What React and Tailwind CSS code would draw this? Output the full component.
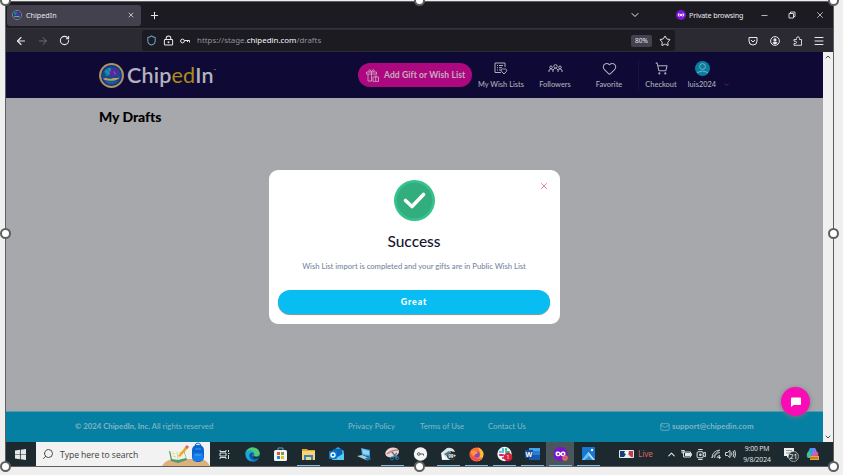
import {
  ArrowLeft, ArrowRight, RotateCw, Shield, LockKeyhole, Star, X, Plus,
  ChevronDown, ChevronUp, Minus, Menu, Heart, ShoppingCart, Mail, Search,
} from "lucide-react";

function PrivateMask({ className }) {
  return (
    <svg className={className} viewBox="0 0 16 16">
      <circle cx="8" cy="8" r="8" fill="#7d17d6" />
      <path d="M8 7C6.5 5 3 4.8 2.8 7.6c0 3.2 3.6 3.6 5.2 1.2 1.6 2.4 5.2 2 5.2-1.2C13 4.8 9.500 5 8 7Z" fill="#fff" />
      <circle cx="5.400" cy="7.800" r="1.200" fill="#7d17d6" />
      <circle cx="10.600" cy="7.800" r="1.200" fill="#7d17d6" />
    </svg>
  );
}

function Logo({ className }) {
  return (
    <svg className={className} viewBox="0 0 24 24">
      <circle cx="12" cy="12" r="11" fill="#172b80" stroke="#ae9260" strokeWidth="1.900" />
      <circle cx="12" cy="12" r="9" fill="#17498f" />
      <path d="M5 8c2-4 6-4 7-3l-1 6-4 2Z" fill="#16809f" />
      <path d="M11 6l6 0 2 5-6 2-3-3Z" fill="#64239c" />
      <path d="M7 8l3 2M10 5l1 3M14 8l2 3" stroke="#2fa4c4" strokeWidth=".8" />
      <path d="M3.800 15c4-2 5 1 8 0s4 0 8-1c-1 2-4 3-7 3s-7 0-9-2Z" fill="#bba064" />
      <path d="M6 18c4-1 8 1 12-1-2 3-10 4-12 1Z" fill="#17679b" />
    </svg>
  );
}

function TabStrip() {
  return (
    <div className="flex h-[26px] items-center bg-[#1c1b22] text-[#e8e8ed]">
      <div className="ml-px flex h-[21px] w-[134px] items-center rounded-[3px] bg-[#42414d] pl-[5px] pr-[6px]">
        <Logo className="size-[10px]" />
        <span className="ml-[4px] flex-1 text-[7.200px]">ChipedIn</span>
        <X size={8} strokeWidth={2.2} />
      </div>
      <Plus className="ml-[8px]" size={11} strokeWidth={2.2} />
      <ChevronDown className="ml-[469px]" size={12} strokeWidth={2} />
      <PrivateMask className="ml-[35px] size-[10px]" />
      <span className="ml-[3px] w-[55px] whitespace-nowrap text-[7.200px] tracking-[-0.150px]">Private browsing</span>
      <Minus className="ml-[16px]" size={9} />
      <svg className="ml-[19px] size-[8px] fill-none stroke-current" viewBox="0 0 8 8">
        <path d="M1 2.500H5.500V7H1ZM2.500 2.500V1H7V5.500H5.500" strokeWidth=".9" />
      </svg>
      <X className="ml-[19px]" size={10} strokeWidth={1.700} />
    </div>
  );
}

function AddressBar() {
  return (
    <div className="flex h-[24px] items-center border-t border-[#34333d] bg-[#2b2a33] text-[#e8e8ed]">
      <ArrowLeft className="ml-[9px]" size={12} strokeWidth={2.300} />
      <ArrowRight className="ml-[10px] text-[#6d6c75]" size={12} strokeWidth={2} />
      <RotateCw className="ml-[10px]" size={11} strokeWidth={2.300} />
      <div className="ml-[72px] flex h-[21px] w-[533px] items-center rounded-[3px] bg-[#1c1b22] pl-[4px] pr-[4px]">
        <Shield className="text-[#68a9cf]" size={11} strokeWidth={2.200} />
        <LockKeyhole className="ml-[6px]" size={11} strokeWidth={2.200} />
        <svg className="ml-[6px] h-[8px] w-[10px] fill-none stroke-current" viewBox="0 0 10 8">
          <circle cx="2.500" cy="4" r="1.900" />
          <path d="M4.500 3.500H9.500V5.500M7.500 3.500V5" />
        </svg>
        <span className="ml-[7px] flex-1 text-[7.900px] text-[#92919a]">
          https://stage.<span className="text-[#f5f5f7]">chipedin.com</span>/drafts
        </span>
        <span className="flex h-[12px] w-[21px] items-center justify-center rounded-[2px] bg-[#42414d] text-[6.500px]">80%</span>
        <Star className="ml-[7px]" size={12} strokeWidth={2} />
      </div>
      <svg className="ml-[73px] size-[10px] fill-none stroke-current" viewBox="0 0 10 10">
        <path d="M1 1.500H9V5A4 4 0 0 1 1 5ZM3 4L5 6L7 4" />
      </svg>
      <svg className="ml-[12px] size-[10px]" viewBox="0 0 10 10">
        <circle cx="5" cy="5" r="4.400" fill="none" stroke="currentColor" />
        <circle cx="5" cy="3.900" r="1.600" fill="currentColor" />
        <path d="M2.200 7Q5 4.500 7.800 7L5 8.500Z" fill="currentColor" />
      </svg>
      <svg className="ml-[13px] size-[10px] fill-none stroke-current" viewBox="0 0 10 10">
        <path d="M1 3.500H3.500V2.500Q3.500 .8 5 .8Q6.500 .8 6.500 2.500V3.500H8.500V9.300H1V7.500H2.200Q3.500 7.500 3.500 6.300Q3.500 5.200 2.200 5.200H1Z" strokeWidth=".9" />
      </svg>
      <Menu className="ml-[10px]" size={12} strokeWidth={2} />
    </div>
  );
}

function NavItem({ className, label, children }) {
  return (
    <div className={`flex flex-col items-center ${className}`}>
      <div className="flex h-[17px] items-center justify-center">{children}</div>
      <span className="mt-[2px] h-[11px] whitespace-nowrap leading-[11px]">{label}</span>
    </div>
  );
}

function SiteHeader() {
  return (
    <header className="flex h-[46px] items-center bg-[#0e0a35] font-['Lato',sans-serif] text-[7.400px] font-medium tracking-[0.040px] text-[#b0afbc]">
      <Logo className="ml-[93px] size-[25px]" />
      <div className="ml-[3px] flex w-[90px] items-start text-[21.500px] font-semibold leading-[24px] tracking-[0.180px] text-[#b4b2bd]">
        Chip<span className="font-normal text-[#ad8b19]">ed</span>In
        <span className="mt-px text-[3px] leading-[12px]">™</span>
      </div>
      <button className="ml-[141px] flex h-[24px] w-[114px] shrink-0 items-center rounded-full bg-[#ae0880] pl-[8px] text-[#c3aebf]">
        <svg className="size-[13px] fill-none stroke-current" viewBox="0 0 13 13">
          <path d="M6 12H2V5M.5 3H10.500V5H.5ZM5.500 3V12M3.500 3Q2 1 3.500 .8Q5 .8 5.500 3Q6 .8 7.500 .8Q9 1 7.500 3M10 5V6.500M7 8H12.500V12.400H7ZM9.700 8V12M8.500 6.700L9.700 8L11 6.700" strokeWidth=".85" />
        </svg>
        <span className="ml-[5px] whitespace-nowrap text-[8.600px] font-bold tracking-[0.060px]">Add Gift or Wish List</span>
      </button>
      <NavItem className="ml-[4px] w-[50px]" label="My Wish Lists">
        <svg className="h-[13px] w-[14px] fill-none stroke-current" viewBox="0 0 14 13">
          <path d="M7 10.500H1V1H11V5M3 3.500H4M5 3.500H9M3 5.700H4M5 5.700H8M3 8H4M5 8H7M10 12L7.500 9.300C6.500 7.300 9 6 10 7.500C11 6 13.500 7.300 12.500 9.300Z" />
        </svg>
      </NavItem>
      <NavItem className="ml-[8px] w-[42px]" label="Followers">
        <svg className="h-[9px] w-[15px] fill-none stroke-current" viewBox="0 0 15 9">
          <circle cx="7.500" cy="2.300" r="1.700" />
          <circle cx="3" cy="3.300" r="1.300" />
          <circle cx="12" cy="3.300" r="1.300" />
          <path d="M5 8V6Q7.500 2.500 10 6V8M1 8V6Q3 3.500 5 6M10 6Q12 3.500 14 6V8" />
        </svg>
      </NavItem>
      <NavItem className="ml-[13px] w-[40px]" label="Favorite">
        <Heart size={15} strokeWidth={1.700} />
      </NavItem>
      <div className="ml-[9px] h-[30px] w-px bg-[#17133f]" />
      <NavItem className="ml-[3px] w-[38px]" label="Checkout">
        <ShoppingCart size={13} strokeWidth={1.900} />
      </NavItem>
      <NavItem className="ml-[5px] w-[34px]" label="luis2024">
        <svg className="size-[15px]" viewBox="0 0 15 15">
          <circle cx="7.500" cy="7.500" r="7.500" fill="#087f9f" />
          <g fill="none" stroke="#77afc0">
            <circle cx="7.500" cy="5.500" r="2.900" />
            <path d="M2 11.500Q7.500 8.500 13 11.500" />
          </g>
        </svg>
      </NavItem>
      <ChevronDown className="ml-[4px] mt-[18px] shrink-0 text-[#8d1774]" size={7} strokeWidth={2.500} />
    </header>
  );
}

function SuccessModal() {
  return (
    <div className="absolute inset-x-0 top-[118px] flex justify-center font-['Lato',sans-serif]">
      <div className="relative mr-px flex h-[154px] w-[291px] flex-col items-center rounded-[9px] bg-white">
        <X className="absolute right-[11px] top-[11px] text-[#e9439c]" size={10} strokeWidth={1.700} />
        <svg className="mt-[10px] size-[41px] shrink-0" viewBox="0 0 41 41">
          <circle cx="20.500" cy="20.500" r="20.500" fill="#35c28b" />
          <circle cx="20.500" cy="20.500" r="17.800" fill="#32ad7d" />
          <path d="M11.500 20.500L18 26.500L29.500 14.500" fill="none" stroke="#fff" strokeWidth="3.600" strokeLinecap="round" strokeLinejoin="round" />
        </svg>
        <h2 className="mt-[10px] text-[15.500px] font-medium leading-[21px] text-[#171630]">Success</h2>
        <p className="mt-[8px] whitespace-nowrap text-[7.700px] font-medium leading-[12px] tracking-[-0.020px] text-[#77879f]">
          Wish List import is completed and your gifts are in Public Wish List
        </p>
        <button className="mt-[18px] h-[24px] w-[272px] shrink-0 rounded-full bg-[#07bdf2] text-[8.800px] font-black tracking-[0.900px] text-white shadow-[0_1px_1px_#77909b]">
          Great
        </button>
      </div>
    </div>
  );
}

function SiteFooter() {
  return (
    <footer className="flex h-[31px] items-center border-t border-[#4f9cb3] bg-[#0580a3] font-['Lato',sans-serif] text-[7.750px] font-medium text-[#83b3c3]">
      <div className="ml-[69px] w-[273px] whitespace-nowrap">
        <b>© 2024 ChipedIn, Inc.</b> All rights reserved
      </div>
      <span className="w-[72px]">Privacy Policy</span>
      <span className="w-[68px]">Terms of Use</span>
      <span className="w-[172px]">Contact Us</span>
      <Mail size={10} strokeWidth={1.800} />
      <b className="ml-[2px] text-[7.900px] tracking-[0.050px]">support@chipedin.com</b>
    </footer>
  );
}

function Scrollbar() {
  return (
    <div className="flex w-[10px] flex-col items-center justify-between bg-[#f0f0f0] py-[1px] text-[#4b4b4b]">
      <ChevronUp size={8} strokeWidth={3} />
      <ChevronDown size={8} strokeWidth={3} />
    </div>
  );
}

const taskIcons = [
  {
    name: "task view",
    art: <g fill="none" stroke="#d8dddf"><path d="M4 4V5.500H10V4M4 13V11.500H10V13M4 7H10V10H4ZM12.500 4V6M12.500 9V13" /><path d="M12 7.500H13.500" /></g>,
  },
  {
    name: "edge",
    art: (
      <g>
        <circle cx="8.500" cy="8.500" r="7.300" fill="#0c78c4" />
        <path d="M1.500 7C4-1 15 0 15.800 7.500C15.500 10 12 11 10 10C12 5 5 3 1.500 7Z" fill="#52ca70" />
        <path d="M1.500 7C4 3 9 4 10 7Q5 6 5 10Q5 13 9 15Q2 15 1.500 7Z" fill="#1aaad5" />
        <path d="M9 7Q6 9 9 11Q12 13 15 11Q12 15 8 13Q4 10 7 7Q8 6 9 7Z" fill="#134d86" />
        <path d="M10 10Q12 12 15.500 10L14.500 12Q11 13 9 11Z" fill="#1c2a30" />
      </g>
    ),
  },
  {
    name: "store",
    art: (
      <g>
        <path d="M6 4V2H11V4" fill="none" stroke="#4da6da" />
        <rect x="2" y="4" width="13" height="11" rx="1.500" fill="#f1f3f4" />
        <path d="M5 6H8V9H5Z" fill="#e45431" /><path d="M9 6H12V9H9Z" fill="#6faa35" />
        <path d="M5 10H8V13H5Z" fill="#188ed1" /><path d="M9 10H12V13H9Z" fill="#efb91e" />
      </g>
    ),
  },
  {
    name: "explorer", open: true,
    art: <g><path d="M2 3H7L8 4H15V14H2Z" fill="#e3a82b" /><path d="M2 5H15V14H2Z" fill="#f7d477" /><path d="M4 9H13V14H11V11H6V14H4Z" fill="#3584bd" /></g>,
  },
  {
    name: "outlook",
    art: <g><path d="M4 5L10 1L16 5V14H4Z" fill="#28a8ea" /><path d="M5 3H14V9L8 12Z" fill="#0a65b7" /><path d="M5 14L16 7V14Z" fill="#59caf2" /><rect x="1" y="5" width="8" height="8" rx="1" fill="#0877cc" /><circle cx="5" cy="9" r="2" fill="none" stroke="#fff" strokeWidth="1.300" /></g>,
  },
  {
    name: "remote",
    art: <g><path d="M5 2L14 4V11L6 9Z" fill="#3ba4df" /><path d="M6 3L13 5V9L7 8Z" fill="#8ed5f4" /><path d="M1 10L6 9L14 12L10 14Z" fill="#a7cce0" /><path d="M9 12L14 11L15 13L11 15Z" fill="#2673af" /></g>,
  },
  {
    name: "snip", open: true,
    art: <g><ellipse cx="8" cy="6.500" rx="7" ry="4.800" fill="#ead7d5" transform="rotate(-15 8 6)" /><path d="M3 8Q8 4 14 4" fill="none" stroke="#c88282" strokeWidth="1.500" /><path d="M8 6L13 12M13 7L9 11" stroke="#567889" strokeWidth="1.300" /><circle cx="8" cy="12.500" r="1.600" fill="none" stroke="#2674ae" /><circle cx="13" cy="12" r="1.600" fill="none" stroke="#2674ae" /></g>,
  },
  {
    name: "pass",
    art: <g><circle cx="8.500" cy="8" r="6.700" fill="#f5f5f5" /><circle cx="6.800" cy="8" r="1.300" fill="none" stroke="#525960" /><path d="M8 8H11.500V9.500" fill="none" stroke="#525960" /></g>,
  },
  {
    name: "inbox", open: true,
    art: <g><path d="M1 7L7 2Q13 1 15 6L10 5L14 14H2Z" fill="#dce8ea" /><path d="M4 8L9 5L12 8L8 11Z" fill="#4e7d8d" /><path d="M2 8L7 13H2Z" fill="#fff" /><ellipse cx="12" cy="10.500" rx="4.800" ry="3.500" fill="#242f34" /><text x="12" y="12.300" fontSize="4.500" fontWeight="700" textAnchor="middle" fill="#fff">99+</text></g>,
  },
  {
    name: "firefox", open: true,
    art: <g><circle cx="8.500" cy="8.500" r="7" fill="#ff7139" /><path d="M10 1Q17 5 15 11Q12 17 5 14Q10 15 12 11Q13 7 10 1Z" fill="#ffbf32" /><path d="M2 4Q1 14 8 15Q13 15 14 11Q11 14 7 12Q2 10 2 4Z" fill="#f8494d" /><circle cx="8.700" cy="8.500" r="3" fill="#8249c7" /><path d="M3 5Q8 4 10 7Q7 8 6 10Q3 9 3 5Z" fill="#ff983c" /></g>,
  },
  {
    name: "slack", open: true,
    art: <g><circle cx="8.500" cy="8" r="7.200" fill="#f5f4f5" /><g strokeWidth="2" strokeLinecap="round"><path d="M7 3V6M4 6H5" stroke="#36c5f0" /><path d="M10 6H13M10 3V4" stroke="#2eb67d" /><path d="M4 9H7M7 12V12" stroke="#e01e5a" /><path d="M9 10V12" stroke="#ecb22e" /></g><circle cx="12" cy="11" r="4.300" fill="#d8203f" /><text x="12" y="13.300" fontSize="6" textAnchor="middle" fill="#fff">1</text></g>,
  },
  {
    name: "word", open: true,
    art: <g><path d="M5 2H16V14H5Z" fill="#2b7cd3" /><path d="M5 2H16V5H5Z" fill="#41a5ee" /><path d="M5 9H16V14H5Z" fill="#165bb0" /><rect x="1" y="4" width="8" height="8" fill="#174f9f" /><text x="5" y="10.500" fontSize="7" fontWeight="700" textAnchor="middle" fill="#fff">W</text></g>,
  },
  {
    name: "private", open: true, active: true,
    art: <g><circle cx="8.500" cy="8" r="7" fill="#7b13cf" /><path d="M8.500 7C7 5 3.500 5 3.500 7.500C3.500 11 7 11 8.500 9C10 11 13.500 11 13.500 7.500C13.500 5 10 5 8.500 7Z" fill="#fff" /><circle cx="6.200" cy="8" r="1.100" fill="#7b13cf" /><circle cx="11" cy="8" r="1.100" fill="#7b13cf" /><circle cx="13" cy="12" r="2.700" fill="#f66b44" /><circle cx="13" cy="12" r="1.100" fill="#934ad4" /></g>,
  },
  {
    name: "photos", open: true,
    art: <g><rect x="2" y="1" width="13" height="13" rx="1" fill="#1976d2" /><path d="M2 14L8.500 6L15 14Z" fill="#b9e4fa" /><path d="M2 14L8 7L12 14Z" fill="#62bff0" /><path d="M5 14L9 10L13 14Z" fill="#278bd8" /><circle cx="12" cy="4" r="1.200" fill="#fff" /></g>,
  },
];

function SearchBox() {
  return (
    <div className="ml-[10px] flex h-[24px] w-[174px] items-center bg-[#f2f2f2] pl-[6px] text-[#3d3d3d]">
      <Search className="-scale-x-100" size={12} strokeWidth={1.800} />
      <span className="ml-[6px] whitespace-nowrap pt-[2px] font-['Open_Sans',sans-serif] text-[8.600px] tracking-[-0.050px]">Type here to search</span>
      <svg className="ml-auto h-[24px] w-[48px]" viewBox="0 0 48 24">
        <path d="M0 24Q3 18 12 17H39Q45 18 48 24Z" fill="#dcb17a" />
        <path d="M7 9L15 11L22 8L25 18L16 21L9 19Z" fill="#4d9a7b" />
        <path d="M8 8L15 10L21 7L24 16L16 18L10 17Z" fill="#f7f3da" />
        <path d="M15 10L16 18M10 11L13 12M11 14L14 15M17 11L20 10" stroke="#b5c8b3" strokeWidth=".7" />
        <path d="M16 14L24 4L26 6L18 15Z" fill="#eba72e" /><path d="M23 5L25 3L27 5L25 7Z" fill="#e8625b" />
        <path d="M33 5Q33 1 36 1Q39 1 39 5" fill="none" stroke="#126bd2" />
        <rect x="30" y="3" width="12" height="17" rx="5" fill="#0865d2" />
        <rect x="31" y="11" width="10" height="8" rx="1.500" fill="#127eeb" />
        <path d="M33 7H39M33 13H39" stroke="#65baf2" strokeWidth=".7" />
      </svg>
    </div>
  );
}

function Taskbar() {
  return (
    <div className="flex h-[24px] items-center bg-[#1c2a30] text-[#e4e8e9]">
      <svg className="ml-[9px] size-[11px] fill-current" viewBox="0 0 10 10">
        <path d="M0 1.400L4.500.7V4.700H0ZM5.200.6L10 0V4.700H5.200ZM0 5.300H4.500V9.300L0 8.600ZM5.200 5.300H10V10L5.200 9.400Z" />
      </svg>
      <SearchBox />
      <div className="flex h-full w-[393px] shrink-0 pl-[1px]">
        {taskIcons.map((icon) => (
          <div
            key={icon.name}
            className={`flex h-full w-[27.950px] shrink-0 flex-col items-center pt-[4px] ${icon.active ? "bg-[#4a565c]" : ""}`}
          >
            <svg className="size-[17px] shrink-0" viewBox="0 0 17 17">{icon.art}</svg>
            {icon.open && <div className="mt-auto h-px w-[23px] bg-[#83bddd]" />}
          </div>
        ))}
      </div>
      <svg className="ml-[16px] h-[8px] w-[15px] shrink-0" viewBox="0 0 15 8">
        <rect width="15" height="8" rx="1" fill="#e9edf0" />
        <path d="M1 1H6L5 3L7 4L5 7H1Z" fill="#173d76" />
        <path d="M10 1H14V7H12L9 4Z" fill="#c8384f" />
        <circle cx="8" cy="3" r="1.500" fill="#fff" />
      </svg>
      <span className="ml-[4px] w-[19px] text-[8px] text-[#db6262]">Live</span>
      <ChevronUp className="ml-[9px] shrink-0" size={11} strokeWidth={2.200} />
      <svg className="ml-[4px] h-[10px] w-[11px] shrink-0" viewBox="0 0 11 10">
        <path d="M2.500 3H9.500V8H2.500ZM9.500 4.500H10.500V6.500H9.500M.5 1.500H3.500M1 1V4H3V1" fill="none" stroke="currentColor" strokeWidth=".9" />
        <path d="M4 4H9V7H4Z" fill="currentColor" />
      </svg>
      <svg className="ml-[4px] size-[11px] shrink-0 fill-none stroke-current" viewBox="0 0 10 10">
        <rect x="1" y="2.500" width="5.500" height="5.500" rx="1" strokeWidth=".9" />
        <path d="M2 .5H6M2 9.500H6M6.500 4L8.500 3V7L6.500 6" strokeWidth=".9" /><circle cx="4" cy="5.200" r=".7" />
      </svg>
      <svg className="ml-[4px] size-[10px] shrink-0 fill-none stroke-current" viewBox="0 0 10 10">
        <path d="M1 9Q1 2 9 1M3.500 9Q4 4 9 3.500M6 9Q6 7 9 6.200M.5 9L8.500 1" strokeWidth=".8" /><circle cx="8.500" cy="8.500" r=".8" fill="currentColor" />
      </svg>
      <svg className="ml-[4px] h-[10px] w-[11px] shrink-0 fill-none stroke-current" viewBox="0 0 11 10">
        <path d="M.5 3.500H2.500L5 1.500V8.500L2.500 6.500H.5ZM6.500 3.500Q7.500 5 6.500 6.500M8 2Q10 5 8 8M9.500 1Q12 5 9.500 9" strokeWidth=".9" />
      </svg>
      <div className="ml-[6px] w-[30px] shrink-0 text-center font-['Open_Sans',sans-serif] text-[6.800px] leading-[11px] tracking-[-0.120px]">
        <div className="whitespace-nowrap">9:00 PM</div>
        <div className="whitespace-nowrap">9/8/2024</div>
      </div>
      <svg className="ml-[11px] h-[15px] w-[16px] shrink-0" viewBox="0 0 16 15">
        <path d="M1 1H11V9H6L4 11V9H1Z" fill="#edf0f1" />
        <path d="M3 3.500H9M3 6H8" stroke="#718087" strokeWidth=".8" />
        <circle cx="10.500" cy="9.500" r="5" fill="#26343a" stroke="#b2babe" strokeWidth=".8" />
        <text x="10.500" y="12.200" fontSize="7" textAnchor="middle" fill="#fff">21</text>
      </svg>
      <svg className="ml-[7px] size-[13px] shrink-0" viewBox="0 0 13 13">
        <path d="M4 0H8L6 7L4 10H2Q0 9 1 6Z" fill="#22a7e6" /><path d="M7 0H9Q10 1 12 7L10 10H5Z" fill="#8b79ee" />
        <path d="M1 5L4 3L5 10H3Q1 9 1 5Z" fill="#51bf77" /><path d="M7 6L12 4Q13 8 11 10H5Z" fill="#e65495" />
        <rect x="4" y="8" width="9" height="4" fill="#eca536" /><path d="M5 9V11M7 9V11M9 9V11M11 9V11" stroke="#51411e" strokeWidth=".7" />
      </svg>
    </div>
  );
}

function Handles() {
  return (
    <div className="absolute -left-[6px] -top-[7px] flex h-[477px] w-[839px] justify-between">
      {["left", "center", "right"].map((side) => (
        <div key={side} className="flex h-full flex-col justify-between">
          <i className="size-[11px] rounded-full border-2 border-[#5e5e5e] bg-white" />
          {side !== "center" && <i className="size-[11px] rounded-full border-2 border-[#5e5e5e] bg-white" />}
          <i className="size-[11px] rounded-full border-2 border-[#5e5e5e] bg-white" />
        </div>
      ))}
    </div>
  );
}

export default function App() {
  return (
    <div className="h-[475px] w-[843px] overflow-hidden bg-[#efefef] pl-[5px] pt-[1px] font-['Noto_Sans',sans-serif]">
      <div className="relative h-[466px] w-[829px] border border-[#5f5f63]">
        <TabStrip />
        <AddressBar />
        <main className="flex h-[390px]">
          <div className="relative flex w-[817px] flex-col bg-[#a7a8ac]">
            <SiteHeader />
            <h1 className="ml-[93px] mt-[9px] flex-1 font-['Lato',sans-serif] text-[14px] font-black leading-[20px] tracking-[-0.060px] text-black">My Drafts</h1>
            <SiteFooter />
            <SuccessModal />
            <div className="absolute bottom-[26px] right-[13px] flex size-[29px] items-center justify-center rounded-full bg-[#f90bb5] shadow-[0_1px_5px_#77777a]">
              <svg className="size-[10px] fill-white" viewBox="0 0 10 10">
                <path d="M1 .5H9Q10 .5 10 1.500V7Q10 8 9 8H2.500L0 10V1.500Q0 .5 1 .5Z" />
              </svg>
            </div>
          </div>
          <Scrollbar />
        </main>
        <Taskbar />
        <Handles />
      </div>
    </div>
  );
}
